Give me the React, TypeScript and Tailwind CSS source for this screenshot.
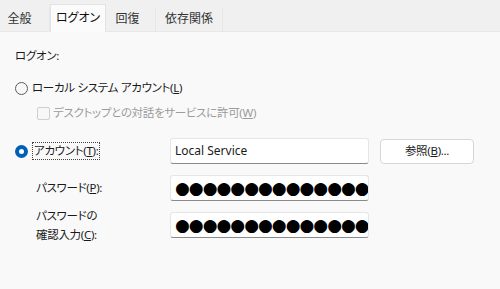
import React from 'react';

const font = "font-['Noto_Sans','Noto_Sans_CJK_JP',sans-serif] [font-feature-settings:'palt']";

function Radio({ checked }: { checked?: boolean }) {
  if (checked) {
    return (
      <span className="flex h-[13px] w-[13px] shrink-0 items-center justify-center rounded-full bg-[#005fb8]">
        <span className="h-[5px] w-[5px] rounded-full bg-white" />
      </span>
    );
  }
  return <span className="h-[13px] w-[13px] shrink-0 rounded-full border border-[#5d5d5d] bg-[#f7f7f7]" />;
}

function Field({ children }: { children: React.ReactNode }) {
  return (
    <div className="flex h-[26px] w-[199px] items-center overflow-hidden rounded-[3px] border border-[#e6e6e6] border-b-[#8a8a8a] bg-white pl-[4px]">
      {children}
    </div>
  );
}

const dots = '●'.repeat(17);

export default function App() {
  const tabs = ['全般', 'ログオン', '回復', '依存関係'];

  return (
    <div className={`h-[289px] w-[500px] overflow-hidden bg-[#f9f9f9] text-[11.5px] tracking-[-0.3px] text-[#1a1a1a] ${font}`}>
      {/* tab strip */}
      <div className="flex h-[32px] items-end border-b border-[#e8e8e8] bg-[#f0f0f0] text-[12px] tracking-normal">
        {tabs.map((t, i) =>
          i === 1 ? (
            <div
              key={t}
              className="-mb-px flex h-[28px] w-[56px] items-start justify-center border-x border-t border-[#e3e3e3] bg-[#fbfbfb] pt-[4px] text-[#111]"
            >
              {t}
            </div>
          ) : (
            <div
              key={t}
              className={`flex h-[24px] items-center justify-center border-r border-[#e6e6e6] bg-[#f0f0f0] text-[#333] ${
                i === 0 ? 'w-[50px] pr-[10px]' : i === 2 ? 'w-[50px] pr-[6px]' : 'w-[67px]'
              }`}
            >
              {t}
            </div>
          )
        )}
      </div>

      <div className="flex flex-col pl-[15px]">
        <div className="mt-[16px] h-[16px] leading-[16px]">ログオン:</div>

        <div className="mt-[16px] flex h-[16px] items-center gap-[4px] leading-[16px]">
          <Radio />
          <span>
            ローカル システム アカウント(<span className="underline">L</span>)
          </span>
        </div>

        <div className="mt-[9px] ml-[22px] flex h-[16px] items-center gap-[3px] leading-[16px] text-[#9b9b9b]">
          <span className="h-[13px] w-[13px] shrink-0 rounded-[2px] border border-[#cfcfcf] bg-[#f7f7f7]" />
          <span>
            デスクトップとの対話をサービスに許可(<span className="underline">W</span>)
          </span>
        </div>

        <div className="mt-[17px] grid grid-cols-[144px_199px_auto] items-center gap-x-[11px] gap-y-[11px]">
          <div className="flex items-center gap-[4px]">
            <Radio checked />
            <span className="border border-dotted border-[#444] px-px leading-[16px]">
              アカウント(<span className="underline">T</span>):
            </span>
          </div>
          <Field>
            <span className="text-[12px] tracking-normal text-[#1b1b1b]">Local Service</span>
          </Field>
          <button className="h-[25px] w-[94px] rounded-[4px] border border-[#d6d6d6] bg-white text-[#1b1b1b]">
            参照(<span className="underline">B</span>)...
          </button>

          <div className="pl-[21px]">
            パスワード(<span className="underline">P</span>):
          </div>
          <Field>
            <span className="whitespace-nowrap font-['DejaVu_Sans'] text-[17px] leading-none tracking-[-1px] text-black">{dots}</span>
          </Field>
          <div />

          <div className="flex h-[26px] flex-col justify-center pl-[21px] leading-[19px]">
            <div>パスワードの</div>
            <div>
              確認入力(<span className="underline">C</span>):
            </div>
          </div>
          <Field>
            <span className="whitespace-nowrap font-['DejaVu_Sans'] text-[17px] leading-none tracking-[-1px] text-black">{dots}</span>
          </Field>
          <div />
        </div>
      </div>
    </div>
  );
}
